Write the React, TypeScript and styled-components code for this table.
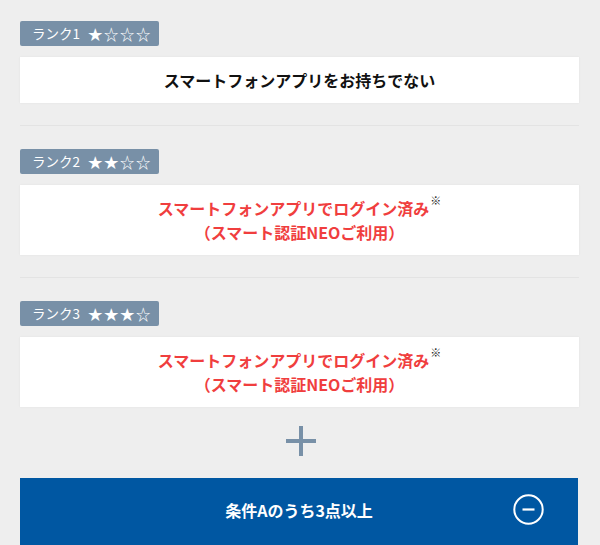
import React from "react";
import styled, { createGlobalStyle } from "styled-components";

const GlobalStyle = createGlobalStyle`
  html, body {
    margin: 0;
    padding: 0;
    background: #eeeeee;
  }
  body {
    font-family: "Noto Sans CJK JP", "Noto Sans", sans-serif;
    overflow: hidden;
  }
`;

const Page = styled.div`
  width: 600px;
  height: 545px;
  box-sizing: border-box;
  padding: 21px 21px 0 20px;
  background: #eeeeee;
  overflow: hidden;
`;

const RankBlock = styled.section`
  display: flex;
  flex-direction: column;
  align-items: flex-start;
`;

const Badge = styled.div`
  display: inline-flex;
  align-items: center;
  height: 25px;
  box-sizing: border-box;
  padding: 0 7px 0 12px;
  background: #7890a7;
  border-radius: 2px;
  color: #ffffff;
  font-size: 13.5px;
  line-height: 25px;
  white-space: nowrap;
`;

const Stars = styled.span`
  margin-left: 8px;
  font-size: 14.5px;
  letter-spacing: 1.5px;
  font-family: "Noto Sans CJK JP", sans-serif;
`;

const Card = styled.div<{ $tall?: boolean }>`
  align-self: stretch;
  margin-top: 11px;
  background: #ffffff;
  box-shadow: 0 0 2px rgba(0, 0, 0, 0.06);
  height: ${(p) => (p.$tall ? "70px" : "46px")};
  display: flex;
  flex-direction: column;
  align-items: center;
  justify-content: center;
  text-align: center;
  font-weight: 700;
  font-size: 16px;
  line-height: 24px;
`;

const Line = styled.div<{ $red?: boolean }>`
  color: ${(p) => (p.$red ? "#f03e3e" : "#111111")};
  white-space: nowrap;
`;

const Note = styled.sup`
  color: #222222;
  font-size: 11px;
  font-weight: 700;
  vertical-align: top;
  line-height: 11px;
  position: relative;
  top: -1px;
  margin-left: 1px;
`;

const Divider = styled.hr`
  margin: 22px 0 23px;
  border: 0;
  height: 1px;
  background: #e3e3e3;
`;

const PlusRow = styled.div`
  display: flex;
  justify-content: center;
  padding: 19px 0 22px;
  padding-left: 2px;
`;

const Bar = styled.div`
  display: grid;
  grid-template-columns: 1fr auto 1fr;
  align-items: center;
  width: 558px;
  box-sizing: border-box;
  padding: 16px 0 24px;
  background: #0057a2;
  color: #ffffff;
`;

const BarText = styled.div`
  grid-column: 2;
  font-size: 16px;
  font-weight: 700;
  line-height: 30px;
  white-space: nowrap;
`;

const BarIcon = styled.div`
  grid-column: 3;
  justify-self: end;
  margin-right: 34px;
  display: flex;
`;

const ranks = [
  { label: "ランク1", filled: 1 },
  { label: "ランク2", filled: 2 },
  { label: "ランク3", filled: 3 },
];

function starText(n: number) {
  return "★".repeat(n) + "☆".repeat(4 - n);
}

export default function App() {
  return (
    <>
      <GlobalStyle />
      <Page>
        {ranks.map((r, i) => (
          <React.Fragment key={r.label}>
            <RankBlock>
              <Badge>
                {r.label}
                <Stars>{starText(r.filled)}</Stars>
              </Badge>
              {i === 0 ? (
                <Card>
                  <Line>スマートフォンアプリをお持ちでない</Line>
                </Card>
              ) : (
                <Card $tall>
                  <Line $red>
                    スマートフォンアプリでログイン済み<Note>※</Note>
                  </Line>
                  <Line $red>（スマート認証NEOご利用）</Line>
                </Card>
              )}
            </RankBlock>
            {i < ranks.length - 1 && <Divider />}
          </React.Fragment>
        ))}
        <PlusRow>
          <svg width="30" height="30" viewBox="0 0 30 30">
            <rect x="0" y="13" width="30" height="4" fill="#7890a7" />
            <rect x="13" y="0" width="4" height="30" fill="#7890a7" />
          </svg>
        </PlusRow>
        <Bar>
          <BarText>条件Aのうち3点以上</BarText>
          <BarIcon>
            <svg width="31" height="31" viewBox="0 0 31 31">
              <circle cx="15.5" cy="15.5" r="14.2" fill="none" stroke="#ffffff" strokeWidth="2" />
              <line x1="9.5" y1="15.5" x2="21.5" y2="15.5" stroke="#ffffff" strokeWidth="2.2" />
            </svg>
          </BarIcon>
        </Bar>
      </Page>
    </>
  );
}
